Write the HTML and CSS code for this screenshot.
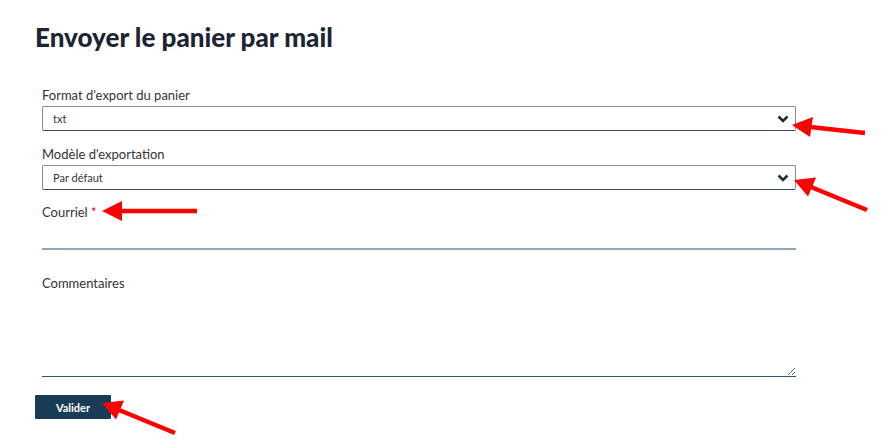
FILE: index.html
```html
<!DOCTYPE html>
<html lang="fr">
<head>
  <meta charset="UTF-8">
  <meta name="viewport" content="width=device-width, initial-scale=1.0">
  <title>Envoyer le panier par mail</title>
  <link rel="stylesheet" href="styles.css">
</head>
<body>
  <div class="page">
    <h1>Envoyer le panier par mail</h1>

    <form class="mail-form">
      <div class="fields">
        <!-- Format -->
        <label class="field-label" for="format">Format d'export du panier</label>
        <div class="select-wrap">
          <select id="format" class="field-select">
            <option>txt</option>
          </select>
          <svg class="chevron" width="12" height="8" viewBox="0 0 12 8">
            <path d="M1.5 1.5 L6 6 L10.5 1.5" fill="none" stroke="#1e2a38" stroke-width="2.6"/>
          </svg>
        </div>

        <!-- Modèle -->
        <label class="field-label" for="model">Modèle d'exportation</label>
        <div class="select-wrap">
          <select id="model" class="field-select">
            <option>Par défaut</option>
          </select>
          <svg class="chevron" width="12" height="8" viewBox="0 0 12 8">
            <path d="M1.5 1.5 L6 6 L10.5 1.5" fill="none" stroke="#1e2a38" stroke-width="2.6"/>
          </svg>
        </div>

        <!-- Courriel -->
        <label class="field-label field-mail" for="mail">Courriel <span class="required">*</span></label>
        <input type="email" id="mail" class="field-input">

        <!-- Commentaires -->
        <label class="field-label field-comment" for="comment">Commentaires</label>
        <textarea id="comment" class="field-textarea"></textarea>
      </div>

      <button type="submit" class="btn-submit">Valider</button>
    </form>
  </div>

  <svg class="annotations" width="886" height="439" viewBox="0 0 886 439">
    <g stroke="#ff0000" stroke-width="4.5" fill="#ff0000">
      <line x1="865" y1="133" x2="810" y2="127"/>
      <polygon points="792,125 813,117 810,137" stroke="none"/>

      <line x1="867" y1="210" x2="811" y2="187"/>
      <polygon points="794,180 816,177.5 808,196.5" stroke="none"/>

      <line x1="197" y1="211" x2="120" y2="211"/>
      <polygon points="102,211 122,201 122,221" stroke="none"/>

      <line x1="175" y1="433" x2="119" y2="410"/>
      <polygon points="102,403 124,400.5 116,419.5" stroke="none"/>
    </g>
  </svg>
</body>
</html>
```

FILE: styles.css
```css
body {
  margin: 0;
  font-family: Lato, 'Liberation Sans', Arial, sans-serif;
  background-color: #fff;
  color: #333;
}

.page {
  padding: 20px 0 0 35px;
}

h1 {
  margin: 0;
  font-size: 26px;
  line-height: 34px;
  font-weight: 900;
  color: #1c2533;
}

.mail-form {
  margin-top: 33px;
}

.fields {
  padding-left: 7px;
  width: 754px;
}

.field-label {
  display: block;
  font-size: 13px;
  line-height: 16px;
  color: #333;
  margin-bottom: 3px;
}

.select-wrap {
  position: relative;
  margin-bottom: 15px;
}

.field-select {
  appearance: none;
  -webkit-appearance: none;
  display: block;
  width: 100%;
  height: 25px;
  padding: 0 10px;
  border: 1px solid #8a8a8a;
  border-bottom-color: #3c4650;
  border-radius: 2px;
  background-color: #fff;
  font-family: inherit;
  font-size: 11px;
  color: #333;
  box-sizing: border-box;
}

.chevron {
  position: absolute;
  right: 7px;
  top: 9px;
  pointer-events: none;
}

.field-mail {
  margin-top: -1px;
}

.required {
  color: #d0021b;
}

.field-input {
  display: block;
  width: 100%;
  height: 27px;
  border: none;
  border-bottom: 2px solid #93a6b5;
  background: transparent;
  box-sizing: border-box;
  font-family: inherit;
}

.field-comment {
  margin-top: 25px;
}

.field-textarea {
  display: block;
  width: 100%;
  height: 83px;
  border: none;
  border-bottom: 1px solid #2b5672;
  background: transparent;
  box-sizing: border-box;
  font-family: inherit;
  resize: vertical;
}

.btn-submit {
  margin-top: 18px;
  width: 76px;
  height: 24px;
  padding: 0;
  border: none;
  border-radius: 1px;
  background-color: #1a3d57;
  color: #fff;
  font-family: inherit;
  font-size: 11px;
  font-weight: 700;
  cursor: pointer;
}

.btn-submit:hover {
  background-color: #122d42;
}

.annotations {
  position: absolute;
  top: 0;
  left: 0;
  pointer-events: none;
}
```
